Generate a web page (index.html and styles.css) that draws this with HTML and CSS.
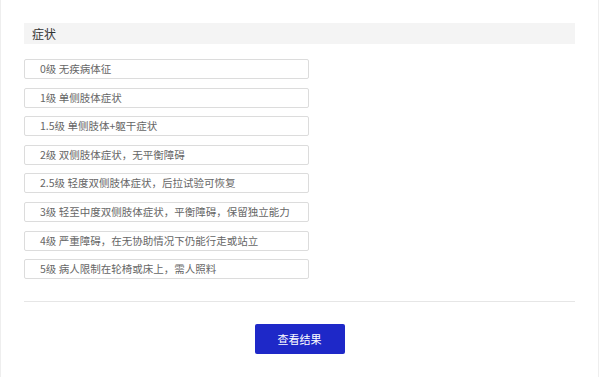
FILE: index.html
```html
<!DOCTYPE html>
<html lang="zh">
<head>
<meta charset="utf-8">
<title>症状</title>
<link rel="stylesheet" href="styles.css">
</head>
<body>
<div class="panel">
  <div class="section-title">症状</div>
  <ul class="options">
    <li class="option">0级 无疾病体征</li>
    <li class="option">1级 单侧肢体症状</li>
    <li class="option">1.5级 单侧肢体+躯干症状</li>
    <li class="option">2级 双侧肢体症状，无平衡障碍</li>
    <li class="option">2.5级 轻度双侧肢体症状，后拉试验可恢复</li>
    <li class="option">3级 轻至中度双侧肢体症状，平衡障碍，保留独立能力</li>
    <li class="option">4级 严重障碍，在无协助情况下仍能行走或站立</li>
    <li class="option">5级 病人限制在轮椅或床上，需人照料</li>
  </ul>
  <div class="divider"></div>
  <div class="actions">
    <button class="btn-primary" type="button">查看结果</button>
  </div>
</div>
</body>
</html>
```

FILE: styles.css
```css
* { box-sizing: border-box; }
html, body {
  margin: 0;
  padding: 0;
  background: #ffffff;
}
body {
  font-family: "Noto Sans CJK SC", "Liberation Sans", sans-serif;
  color: #333;
}
.panel {
  width: 599px;
  height: 377px;
  border-left: 1px solid #eeeeee;
  border-right: 1px solid #eeeeee;
  padding: 23px 23px 0 23px;
}
.section-title {
  height: 21px;
  background: #f4f4f4;
  padding-left: 8px;
  font-size: 12px;
  line-height: 21px;
  color: #333;
}
.options {
  list-style: none;
  margin: 15px 0 0 0;
  padding: 0;
  display: flex;
  flex-direction: column;
  gap: 8.6px;
}
.option {
  width: 285px;
  height: 20px;
  border: 1px solid #dcdcdc;
  border-radius: 2px;
  padding-left: 15px;
  font-size: 10.5px;
  line-height: 18px;
  color: #666;
  white-space: nowrap;
}
.divider {
  margin-top: 22px;
  height: 1px;
  background: #e6e6e6;
}
.actions {
  display: flex;
  justify-content: center;
  margin-top: 22px;
}
.btn-primary {
  width: 90px;
  height: 30px;
  border: none;
  border-radius: 2px;
  background: #1e28c8;
  color: #fff;
  font-family: "Noto Sans CJK SC", "Liberation Sans", sans-serif;
  font-size: 11px;
  padding: 0;
}
```
